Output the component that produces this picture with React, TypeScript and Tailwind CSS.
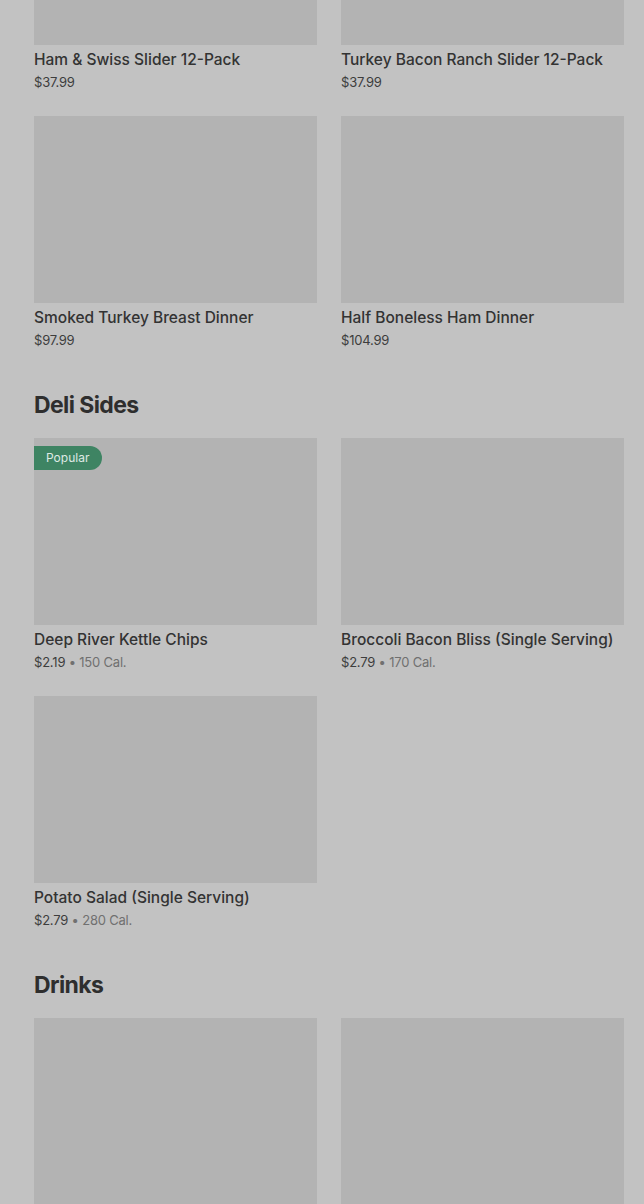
const sections = [
  {
    title: null as string | null,
    items: [
      { name: "Ham & Swiss Slider 12-Pack", price: "$37.99" },
      { name: "Turkey Bacon Ranch Slider 12-Pack", price: "$37.99" },
      { name: "Smoked Turkey Breast Dinner", price: "$97.99" },
      { name: "Half Boneless Ham Dinner", price: "$104.99" },
    ],
  },
  {
    title: "Deli Sides",
    items: [
      { name: "Deep River Kettle Chips", price: "$2.19", cal: "150 Cal.", popular: true },
      { name: "Broccoli Bacon Bliss (Single Serving)", price: "$2.79", cal: "170 Cal." },
      { name: "Potato Salad (Single Serving)", price: "$2.79", cal: "280 Cal." },
    ],
  },
  {
    title: "Drinks",
    items: [
      { name: "", price: "" },
      { name: "", price: "" },
    ],
  },
];

type Item = { name: string; price: string; cal?: string; popular?: boolean };

function Card({ item }: { item: Item }) {
  return (
    <div className="flex flex-col">
      <div className="relative h-[187px] bg-[#b3b3b3]">
        {item.popular && (
          <span className="absolute left-0 top-2 flex h-6 items-center rounded-r-full bg-[#3e8463] pl-3 pr-[13px] text-[12px] text-[#dfe9e3]">
            Popular
          </span>
        )}
      </div>
      {item.name && (
        <>
          <div className="mt-[5px] text-[15.5px] leading-5 font-medium text-[#333333]">
            {item.name}
          </div>
          <div className="mt-[2px] text-[13px] leading-5 tracking-[-0.2px] text-[#3d3d3d]">
            {item.price}
            {item.cal && (
              <span className="text-[#707070]"> • {item.cal}</span>
            )}
          </div>
        </>
      )}
    </div>
  );
}

export default function App() {
  return (
    <div
      className="h-[1204px] overflow-hidden bg-[#c2c2c2] pl-[34px] pr-[20px]"
      style={{ fontFamily: "Inter, 'Noto Sans', sans-serif" }}
    >
      <div className="mt-[-142px] flex flex-col gap-[39px]">
        {sections.map((s, i) => (
          <section key={i}>
            {s.title && (
              <h2 className="mb-[17px] text-[23px] leading-8 font-bold tracking-[-0.6px] text-[#2e2e2e]">
                {s.title}
              </h2>
            )}
            <div className="grid grid-cols-2 gap-6">
              {s.items.map((it, j) => (
                <Card key={j} item={it} />
              ))}
            </div>
          </section>
        ))}
      </div>
    </div>
  );
}
